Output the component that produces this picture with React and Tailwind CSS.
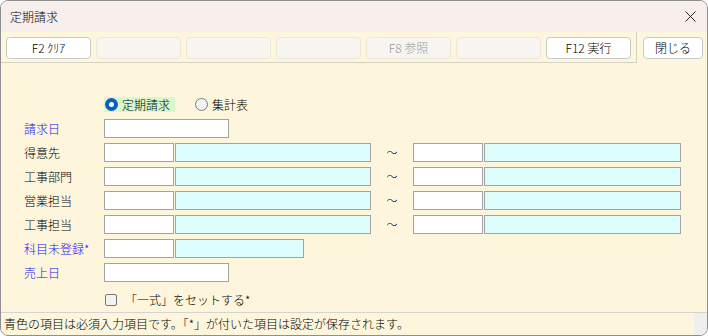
const font = { fontFamily: '"Noto Sans CJK JP", "Noto Sans", sans-serif' };

const toolButtons = [
  { label: "F2 ｸﾘｱ", enabled: true },
  { label: "", enabled: false },
  { label: "", enabled: false },
  { label: "", enabled: false },
  { label: "F8 参照", enabled: false },
  { label: "", enabled: false },
  { label: "F12 実行", enabled: true },
];

const rangeRows = ["得意先", "工事部門", "営業担当", "工事担当"];

function ToolButton({ label, enabled }) {
  return (
    <button
      className={
        "w-[85px] h-[22px] rounded-[4px] text-[12px] flex items-center justify-center " +
        (enabled
          ? "bg-white border border-[#c9c9c9] text-black"
          : "bg-[#f7f5ef] border border-[#ece7d6] text-[#999]")
      }
    >
      {label}
    </button>
  );
}

function Field({ w, cyan }) {
  return (
    <div
      className={
        "h-[19px] border border-[#a3a3a3] " + (cyan ? "bg-[#ddfdfd]" : "bg-white")
      }
      style={{ width: w }}
    />
  );
}

function Label({ text, blue }) {
  return (
    <div className={"w-[80px] text-[12px] " + (blue ? "text-[#1414f0]" : "text-black")}>
      {text}
    </div>
  );
}

export default function App() {
  return (
    <div
      className="w-[708px] h-[336px] flex flex-col border border-[#8e8e8e] rounded-[8px] overflow-hidden bg-[#fef6dc] font-light text-black"
      style={font}
    >
      {/* title bar */}
      <div className="h-[31px] shrink-0 flex items-center justify-between pl-[9px] pr-[11px] bg-[#f8efed]">
        <span className="text-[12px]">定期請求</span>
        <svg width="11" height="11" viewBox="0 0 11 11">
          <path d="M0.5 0.5 L10.5 10.5 M10.5 0.5 L0.5 10.5" stroke="#222" strokeWidth="1" />
        </svg>
      </div>

      {/* toolbar */}
      <div className="h-[31px] shrink-0 flex">
        <div className="w-[636px] h-full border-r border-b border-[#d6d2c2] flex gap-[5px] pl-[5px] pt-[5px]">
          {toolButtons.map((b, i) => (
            <ToolButton key={i} {...b} />
          ))}
        </div>
        <div className="pl-[6px] pt-[5px]">
          <button className="w-[60px] h-[22px] rounded-[4px] bg-white border border-[#c9c9c9] text-[12px] flex items-center justify-center">
            閉じる
          </button>
        </div>
      </div>

      {/* form */}
      <div className="flex-1 flex flex-col pl-[23px] pt-[34px]">
        <div className="ml-[80px] h-[15px] flex items-center text-[12px]">
          <div className="h-[15px] flex items-center gap-[4px] pl-[1px] pr-[5px] bg-[#d9f7cf]">
            <span className="w-[13px] h-[13px] rounded-full bg-[#0a5fc2] flex items-center justify-center">
              <span className="w-[5px] h-[5px] rounded-full bg-white" />
            </span>
            <span>定期請求</span>
          </div>
          <div className="ml-[20px] flex items-center gap-[4px]">
            <span className="w-[13px] h-[13px] rounded-full bg-[#f3f3f3] border border-[#7d7d7d]" />
            <span>集計表</span>
          </div>
        </div>

        <div className="mt-[7px] flex flex-col gap-[5px]">
          <div className="h-[19px] flex items-center">
            <Label text="請求日" blue />
            <Field w={125} />
          </div>

          {rangeRows.map((r) => (
            <div key={r} className="h-[19px] flex items-center">
              <Label text={r} />
              <div className="flex gap-[1px]">
                <Field w={70} />
                <Field w={196} cyan />
              </div>
              <div className="w-[42px] text-center text-[11px]">〜</div>
              <div className="flex gap-[1px]">
                <Field w={70} />
                <Field w={197} cyan />
              </div>
            </div>
          ))}

          <div className="h-[19px] flex items-center">
            <Label text="科目未登録*" blue />
            <div className="flex gap-[1px]">
              <Field w={70} />
              <Field w={129} cyan />
            </div>
          </div>

          <div className="h-[19px] flex items-center">
            <Label text="売上日" blue />
            <Field w={125} />
          </div>
        </div>

        <div className="mt-[11px] ml-[81px] h-[13px] flex items-center gap-[8px] text-[12px]">
          <span className="w-[12px] h-[12px] rounded-[2px] border border-[#777] bg-[#f3f3f3]" />
          <span>「一式」をセットする*</span>
        </div>
      </div>

      {/* status bar */}
      <div className="h-[23px] shrink-0 flex border-t border-[#d4d4d4]">
        <div className="flex-1 flex items-center pl-[3px] text-[12px] bg-[#fef6dc]">
          青色の項目は必須入力項目です。「*」が付いた項目は設定が保存されます。
        </div>
        <div className="w-[13px] bg-[#efefef]" />
      </div>
    </div>
  );
}
